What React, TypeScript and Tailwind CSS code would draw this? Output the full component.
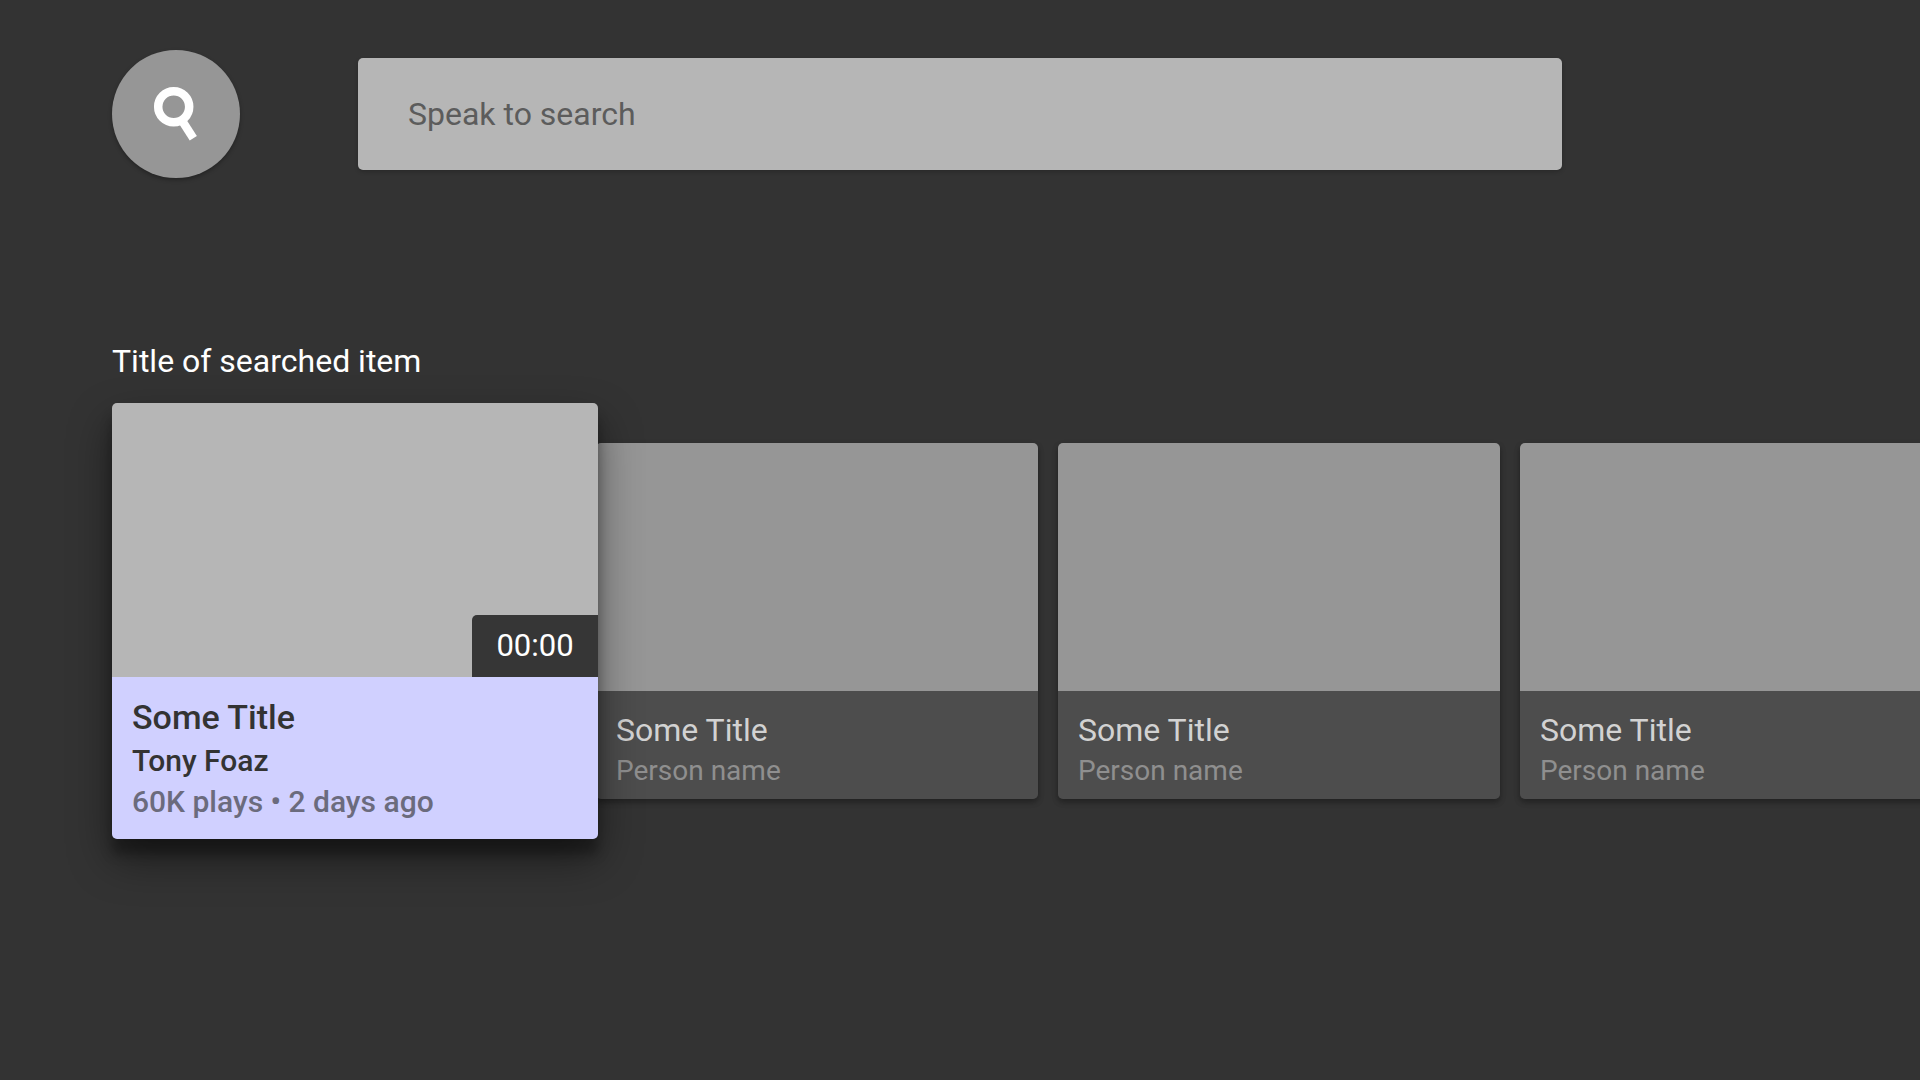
function Card({ first }: { first?: boolean }) {
  return (
    <div className={`${first ? "-ml-[2px]" : ""} w-[442px] shrink-0 h-[356px] rounded-[5px] overflow-hidden flex flex-col shadow-[0_3px_6px_rgba(0,0,0,0.16),0_3px_6px_rgba(0,0,0,0.23)]`}>
      <div className="h-[248px] bg-[#969696]" />
      <div className="flex-1 bg-[#4d4d4d] pl-[20px] pt-[19px]">
        <div className="text-[32px] leading-[40px] text-[#d2d2d2]">Some Title</div>
        <div className="text-[28px] leading-[42px] text-[#8f8f8f]">Person name</div>
      </div>
    </div>
  );
}

export default function App() {
  return (
    <div className="w-[1920px] h-[1080px] bg-[#333333] overflow-hidden font-['Roboto',sans-serif]">
      <div className="flex items-center pt-[50px] pl-[112px]">
        <div className="w-[128px] h-[128px] shrink-0 rounded-full bg-[#969696] flex items-center justify-center shadow-[0_2px_4px_rgba(0,0,0,0.3)]">
          <svg width="64" height="64" viewBox="0 0 64 64" fill="none" stroke="#fff">
            <circle cx="29.7" cy="24.7" r="15.5" strokeWidth="8.5" />
            <path d="M37.6 38 L49.3 56.3" strokeWidth="8.5" />
          </svg>
        </div>
        <div className="ml-[118px] w-[1204px] h-[112px] bg-[#b6b6b6] rounded-[5px] flex items-center pl-[50px] text-[32px] text-[#5c5c5c] shadow-[0_2px_4px_rgba(0,0,0,0.2)]">
          Speak to search
        </div>
      </div>
      <div className="pl-[112px] mt-[163px] text-[32px] leading-[40px] text-white">Title of searched item</div>
      <div className="flex items-start pl-[112px] mt-[22px]">
        <div className="relative z-10 w-[486px] shrink-0 h-[436px] rounded-[5px] overflow-hidden flex flex-col shadow-[0_20px_44px_rgba(0,0,0,0.45),0_15px_12px_rgba(0,0,0,0.3)]">
          <div className="relative h-[274px] bg-[#b6b6b6]">
            <div className="absolute right-0 bottom-0 w-[126px] h-[62px] bg-[#363636] rounded-tl-[5px] flex items-center justify-center text-[31px] text-white">00:00</div>
          </div>
          <div className="flex-1 bg-[#d0d0ff] pl-[20px] pt-[18px]">
            <div className="text-[34px] leading-[44px] font-medium text-[#333333]">Some Title</div>
            <div className="text-[30px] leading-[38px] font-medium text-[#333333] mt-[3px]">Tony Foaz</div>
            <div className="text-[30px] leading-[44px] font-medium text-[#6b6b7d]">60K plays • 2 days ago</div>
          </div>
        </div>
        <div className="flex items-start mt-[40px] gap-[20px]">
          <Card first />
          <Card />
          <Card />
        </div>
      </div>
    </div>
  );
}
